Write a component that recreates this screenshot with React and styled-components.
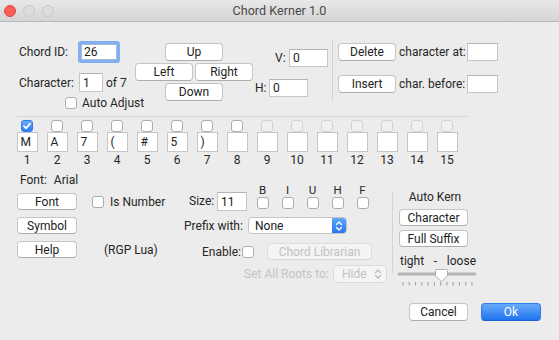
import React from "react";
import styled, { createGlobalStyle } from "styled-components";

const GlobalStyle = createGlobalStyle`
  html, body {
    margin: 0;
    padding: 0;
    background: #ececec;
  }
  body {
    font-family: Roboto, "Liberation Sans", sans-serif;
    font-size: 12px;
    color: #262626;
  }
`;

const Window = styled.div`
  width: 559px;
  height: 340px;
  background: #ececec;
  display: flex;
  flex-direction: column;
  overflow: hidden;
`;

const TitleBar = styled.div`
  height: 21px;
  border-bottom: 1px solid #b9b9b9;
  background: linear-gradient(#e8e8e8, #d4d4d4);
  display: grid;
  grid-template-columns: 1fr auto 1fr;
  align-items: center;
`;

const Lights = styled.div`
  display: flex;
  gap: 7px;
  padding-left: 4px;
`;

const Light = styled.span`
  width: 12px;
  height: 12px;
  border-radius: 50%;
  box-sizing: border-box;
  background: ${(p) => (p.$red ? "#fc5f57" : "#dcdcdc")};
  border: 1px solid ${(p) => (p.$red ? "#de4a43" : "#c8c8c8")};
`;

const Title = styled.div`
  font-size: 12.6px;
  color: #4a4a4a;
`;

const Body = styled.div`
  padding-left: 17px;
  display: flex;
  flex-direction: column;
`;

const Row = styled.div`
  display: flex;
  align-items: center;
  height: ${(p) => p.$h || 18}px;
  margin-top: ${(p) => p.$mt || 0}px;
  margin-left: ${(p) => p.$ml || 0}px;
`;

const Label = styled.span`
  display: inline-block;
  width: ${(p) => (p.$w ? `${p.$w}px` : "auto")};
  margin-left: ${(p) => p.$ml || 0}px;
  color: ${(p) => (p.$disabled ? "#c4c4c4" : "#262626")};
  white-space: nowrap;
  line-height: 14px;
`;

const Field = styled.div`
  box-sizing: border-box;
  width: ${(p) => p.$w}px;
  height: ${(p) => p.$h}px;
  background: #fff;
  border: 1px solid #c6c6c6;
  border-top-color: #b4b4b4;
  padding-left: ${(p) => (p.$focus ? 2 : 3)}px;
  margin-top: ${(p) => p.$mt || 0}px;
  display: flex;
  align-items: center;
  color: #222;
  ${(p) =>
    p.$focus &&
    `
    border-color: #9fb9e0;
    box-shadow: 0 0 0 3px #83aef0;
    border-radius: 1px;
  `}
`;

const Button = styled.div`
  box-sizing: border-box;
  width: ${(p) => p.$w}px;
  height: ${(p) => p.$h || 18}px;
  margin-left: ${(p) => p.$ml || 0}px;
  border-radius: 4px;
  border: 1px solid ${(p) => (p.$disabled ? "#dcdcdc" : "#c5c5c5")};
  border-bottom-color: ${(p) => (p.$disabled ? "#d6d6d6" : "#adadad")};
  background: ${(p) => (p.$disabled ? "#f4f4f4" : "#fff")};
  color: ${(p) => (p.$disabled ? "#c2c2c2" : "#222")};
  display: flex;
  align-items: center;
  justify-content: center;
  flex-shrink: 0;
  ${(p) =>
    p.$primary &&
    `
    background: linear-gradient(#69aaf9, #1f74f0);
    border-color: #2f7ded;
    border-bottom-color: #1b63d6;
    color: #fff;
  `}
`;

const Check = styled.span`
  box-sizing: border-box;
  width: 12px;
  height: 12px;
  border-radius: 3px;
  flex-shrink: 0;
  margin-left: ${(p) => p.$ml || 0}px;
  margin-top: ${(p) => p.$mt || 0}px;
  display: flex;
  align-items: center;
  justify-content: center;
  background: ${(p) =>
    p.$checked
      ? "linear-gradient(#6aaaf9, #2d7ff5)"
      : p.$dim
      ? "#f0f0f0"
      : "#fff"};
  border: 1px solid
    ${(p) => (p.$checked ? "#2f7de8" : p.$dim ? "#d2d2d2" : "#adadad")};
`;

const CheckBox = ({ checked, dim, ml, mt }) => (
  <Check $checked={checked} $dim={dim} $ml={ml} $mt={mt}>
    {checked && (
      <svg width="10" height="10" viewBox="0 0 10 10">
        <path
          d="M2 5.2 L4.1 7.3 L8 2.6"
          fill="none"
          stroke="#fff"
          strokeWidth="1.7"
          strokeLinecap="round"
          strokeLinejoin="round"
        />
      </svg>
    )}
  </Check>
);

const Select = styled.div`
  box-sizing: border-box;
  width: ${(p) => p.$w}px;
  height: ${(p) => p.$h}px;
  display: flex;
  align-items: stretch;
  border: 1px solid ${(p) => (p.$disabled ? "#dadada" : "#c4c4c4")};
  border-radius: 4px;
  background: ${(p) => (p.$disabled ? "#f4f4f4" : "#fff")};
  overflow: hidden;
`;

const SelectText = styled.span`
  flex: 1;
  padding-left: ${(p) => p.$pl}px;
  display: flex;
  align-items: center;
  color: ${(p) => (p.$disabled ? "#c2c2c2" : "#222")};
`;

const SelectArrow = styled.span`
  width: ${(p) => (p.$disabled ? 16 : 14)}px;
  display: flex;
  align-items: center;
  justify-content: center;
  background: ${(p) =>
    p.$disabled ? "transparent" : "linear-gradient(#5ea4f8, #2877f0)"};
`;

const Chevrons = ({ color }) => (
  <svg width="8" height="12" viewBox="0 0 8 12">
    <path
      d="M1.5 4.5 L4 2 L6.5 4.5 M1.5 7.5 L4 10 L6.5 7.5"
      fill="none"
      stroke={color}
      strokeWidth="1.3"
      strokeLinecap="round"
      strokeLinejoin="round"
    />
  </svg>
);

/* top area */
const TopSection = styled.div`
  display: flex;
  height: 75px;
  margin-top: 19px;
`;

const LeftCol = styled.div`
  width: 118px;
  padding-left: 2px;
  box-sizing: border-box;
  display: flex;
  flex-direction: column;
`;

const ArrowPad = styled.div`
  width: 118px;
  padding-top: 2px;
  display: flex;
  flex-direction: column;
  align-items: center;
  gap: 2px;
`;

const ArrowRow = styled.div`
  display: flex;
  gap: 2px;
`;

const VHCol = styled.div`
  width: 73px;
  margin-left: 2px;
  display: flex;
  flex-direction: column;
`;

const VSep = styled.div`
  width: 1px;
  height: ${(p) => p.$h}px;
  margin-top: ${(p) => p.$mt}px;
  margin-left: ${(p) => p.$ml || 0}px;
  background: #d3d3d3;
`;

const EditCol = styled.div`
  margin-left: 5px;
  display: flex;
  flex-direction: column;
`;

const HRule = styled.div`
  width: 450px;
  height: 1px;
  background: #d3d3d3;
`;

/* character strip */
const CharGrid = styled.div`
  display: grid;
  grid-template-columns: repeat(15, 30px);
  margin-left: -5px;
  margin-top: 3px;
`;

const Cell = styled.div`
  display: flex;
  flex-direction: column;
  align-items: center;
`;

const CharBox = styled.div`
  box-sizing: border-box;
  width: 21px;
  height: 20px;
  background: #fff;
  border: 1px solid #c6c6c6;
  padding-left: 3px;
  display: flex;
  align-items: center;
  color: #222;
`;

const Num = styled.div`
  margin-top: 1px;
  line-height: 14px;
  color: #262626;
`;

/* bottom area */
const BottomSection = styled.div`
  display: flex;
  height: 117px;
  margin-top: 6px;
`;

const LeftPart = styled.div`
  width: 167px;
  display: flex;
  flex-direction: column;
`;

const FontRow = styled.div`
  padding-left: 3px;
  line-height: 14px;
  display: flex;
  gap: 7px;
`;

const BtnArea = styled.div`
  display: flex;
`;

const ButtonCol = styled.div`
  width: 60px;
  margin-top: 6px;
  display: flex;
  flex-direction: column;
  gap: 7px;
`;

const OptionCol = styled.div`
  width: 92px;
  margin-left: 15px;
  display: flex;
  flex-direction: column;
`;

const Note = styled.div`
  margin-top: 35px;
  margin-left: 12px;
  line-height: 14px;
`;

const MiddlePart = styled.div`
  width: 208px;
  display: flex;
  flex-direction: column;
`;

const SizeRow = styled.div`
  display: flex;
  align-items: flex-start;
  margin-top: 11px;
`;

const SizeLabel = styled.span`
  width: 28px;
  margin-left: 5px;
  margin-top: 8px;
  line-height: 19px;
`;

const StyleCells = styled.div`
  display: flex;
  margin-left: 3px;
`;

const StyleCell = styled.div`
  width: 25px;
  display: flex;
  flex-direction: column;
  align-items: center;
`;

const StyleLetter = styled.span`
  line-height: 12px;
  font-size: 11.5px;
`;

const AutoKern = styled.div`
  width: 77px;
  margin-left: 6px;
  display: flex;
  flex-direction: column;
`;

const KernTitle = styled.div`
  width: 72px;
  margin-top: 17px;
  text-align: center;
  line-height: 14px;
`;

const KernButtons = styled.div`
  margin-top: 5px;
  display: flex;
  flex-direction: column;
  gap: 4px;
`;

const RangeLabels = styled.div`
  margin-top: 8px;
  line-height: 13px;
  display: flex;
  justify-content: space-between;
  padding-left: 1px;
`;

const SliderArt = styled.svg`
  margin-left: -2px;
  display: block;
`;

const Footer = styled.div`
  display: flex;
  justify-content: flex-end;
  gap: 13px;
  padding-right: 18px;
  margin-top: 13px;
`;

const chars = ["M", "A", "7", "(", "#", "5", ")", "", "", "", "", "", "", "", ""];

const Slider = () => {
  const ticks = Array.from({ length: 12 }, (_, i) => 6 + i * 6.27);
  return (
    <SliderArt width="80" height="20" viewBox="0 0 80 20">
      <line x1="2" y1="6" x2="78" y2="6" stroke="#b6b6b6" strokeWidth="3" strokeLinecap="round" />
      {ticks.map((x) => (
        <line key={x} x1={x} y1="14" x2={x} y2="17.5" stroke="#9a9a9a" strokeWidth="1" />
      ))}
      <path
        d="M38.5 2.5 Q38.5 1.5 39.5 1.5 L49.5 1.5 Q50.5 1.5 50.5 2.5 L50.5 8 L44.5 13.5 L38.5 8 Z"
        fill="#fff"
        stroke="#a9a9a9"
        strokeWidth="0.9"
      />
    </SliderArt>
  );
};

export default function App() {
  return (
    <Window>
      <GlobalStyle />
      <TitleBar>
        <Lights>
          <Light $red />
          <Light />
          <Light />
        </Lights>
        <Title>Chord Kerner 1.0</Title>
        <div />
      </TitleBar>

      <Body>
        <TopSection>
          <LeftCol>
            <Row $h={22}>
              <Label $w={62}>Chord ID:</Label>
              <Field $w={36} $h={16} $focus>
                26
              </Field>
            </Row>
            <Row $h={19} $mt={10}>
              <Label $w={60}>Character:</Label>
              <Field $w={24} $h={19}>1</Field>
              <Label $ml={3}>of 7</Label>
            </Row>
            <Row $h={12} $mt={5}>
              <CheckBox ml={46} />
              <Label $ml={5}>Auto Adjust</Label>
            </Row>
          </LeftCol>

          <ArrowPad>
            <Button $w={58}>Up</Button>
            <ArrowRow>
              <Button $w={58}>Left</Button>
              <Button $w={58}>Right</Button>
            </ArrowRow>
            <Button $w={58}>Down</Button>
          </ArrowPad>

          <VHCol>
            <Row $mt={8} $ml={20}>
              <Label $w={14}>V:</Label>
              <Field $w={39} $h={18}>0</Field>
            </Row>
            <Row $mt={12}>
              <Label $w={14}>H:</Label>
              <Field $w={39} $h={18}>0</Field>
            </Row>
          </VHCol>

          <VSep $h={60} $mt={-1} $ml={4} />

          <EditCol>
            <Row $mt={2}>
              <Button $w={58}>Delete</Button>
              <Label $w={68} $ml={3}>character at:</Label>
              <Field $w={31} $h={18} />
            </Row>
            <Row $mt={14}>
              <Button $w={58}>Insert</Button>
              <Label $w={68} $ml={3}>char. before:</Label>
              <Field $w={31} $h={18} />
            </Row>
          </EditCol>
        </TopSection>

        <HRule />

        <CharGrid>
          {chars.map((c, i) => (
            <Cell key={i}>
              <CheckBox checked={i === 0} dim={i >= 8} />
              <CharBox>{c}</CharBox>
              <Num>{i + 1}</Num>
            </Cell>
          ))}
        </CharGrid>

        <BottomSection>
          <LeftPart>
            <FontRow>
              <span>Font:</span>
              <span>Arial</span>
            </FontRow>
            <BtnArea>
              <ButtonCol>
                <Button $w={60} $h={17}>Font</Button>
                <Button $w={60} $h={17}>Symbol</Button>
                <Button $w={60} $h={17}>Help</Button>
              </ButtonCol>
              <OptionCol>
                <Row $h={12} $mt={9}>
                  <CheckBox />
                  <Label $ml={6}>Is Number</Label>
                </Row>
                <Note>(RGP Lua)</Note>
              </OptionCol>
            </BtnArea>
          </LeftPart>

          <MiddlePart>
            <SizeRow>
              <SizeLabel>Size:</SizeLabel>
              <Field $w={30} $h={19} $mt={8}>11</Field>
              <StyleCells>
                {["B", "I", "U", "H", "F"].map((l) => (
                  <StyleCell key={l}>
                    <StyleLetter>{l}</StyleLetter>
                    <CheckBox mt={1} />
                  </StyleCell>
                ))}
              </StyleCells>
            </SizeRow>
            <Row $h={17} $mt={6}>
              <Label $w={64}>Prefix with:</Label>
              <Select $w={99} $h={17}>
                <SelectText $pl={6}>None</SelectText>
                <SelectArrow>
                  <Chevrons color="#fff" />
                </SelectArrow>
              </Select>
            </Row>
            <Row $h={17} $mt={9} $ml={18}>
              <Label $w={40}>Enable:</Label>
              <CheckBox />
              <Button $w={105} $h={17} $ml={13} $disabled>
                Chord Librarian
              </Button>
            </Row>
            <Row $h={18} $mt={5} $ml={60}>
              <Label $w={89} $disabled>
                Set All Roots to:
              </Label>
              <Select $w={54} $h={18} $disabled>
                <SelectText $pl={8} $disabled>
                  Hide
                </SelectText>
                <SelectArrow $disabled>
                  <Chevrons color="#b9b9b9" />
                </SelectArrow>
              </Select>
            </Row>
          </MiddlePart>

          <VSep $h={81} $mt={19} />

          <AutoKern>
            <KernTitle>Auto Kern</KernTitle>
            <KernButtons>
              <Button $w={69} $h={17}>Character</Button>
              <Button $w={69} $h={17}>Full Suffix</Button>
            </KernButtons>
            <RangeLabels>
              <span>tight</span>
              <span>-</span>
              <span>loose</span>
            </RangeLabels>
            <Slider />
          </AutoKern>
        </BottomSection>

        <Footer>
          <Button $w={59}>Cancel</Button>
          <Button $w={60} $primary>
            Ok
          </Button>
        </Footer>
      </Body>
    </Window>
  );
}
